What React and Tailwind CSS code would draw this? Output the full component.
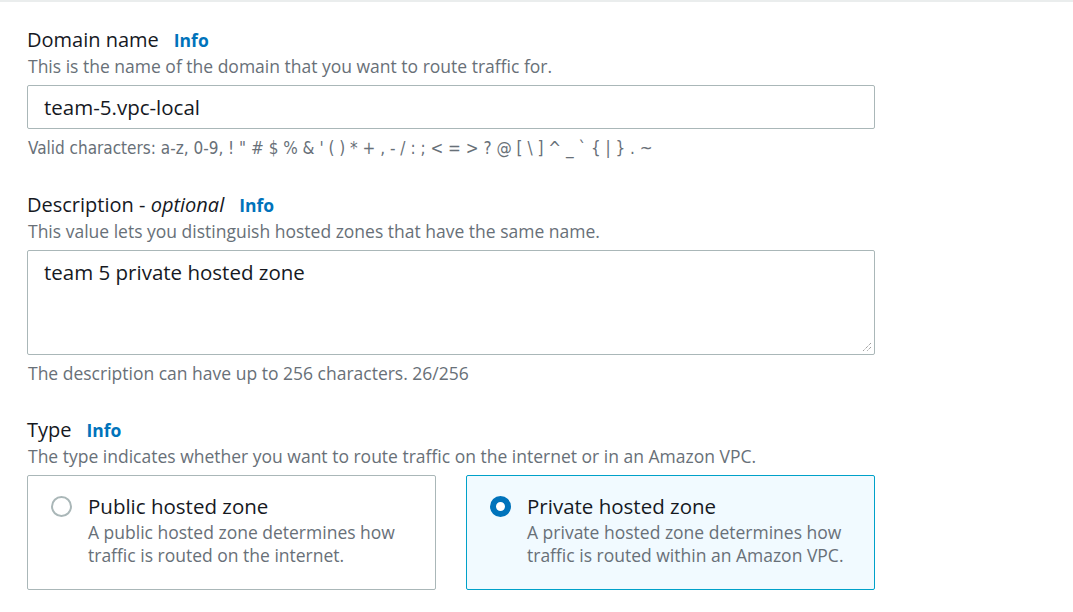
export default function App() {
  const font = { fontFamily: '"Open Sans", "Noto Sans", sans-serif' };
  const Info = () => (
    <span className="ml-[15px] text-[17.5px] font-bold text-[#0073bb] leading-[26px]">Info</span>
  );
  return (
    <div style={font} className="w-[1073px] h-[612px] bg-white overflow-hidden">
      <div className="h-[3px] border-t-2 border-[#eaeded]" />
      <div className="pl-[27px] w-[875px]">
        {/* Domain name */}
        <div className="mt-[24px] flex items-baseline">
          <span className="text-[20px] text-[#16191f] leading-[26px]">Domain name</span>
          <Info />
        </div>
        <div className="pl-px text-[17.5px] text-[#687078] leading-[26px]">
          This is the name of the domain that you want to route traffic for.
        </div>
        <div className="mt-[6px] h-[44px] border border-[#aab7b8] rounded-[2px] flex items-center pl-[16px] text-[20.5px] text-[#16191f]">
          team-5.vpc-local
        </div>
        <div
          className="mt-[6px] pl-px text-[17px] text-[#687078] leading-[26px]"
          style={{ fontFamily: '"Liberation Sans Narrow", "DejaVu Sans Condensed", sans-serif' }}
        >
          Valid characters: a-z, 0-9, ! " # $ % &amp; ' ( ) * + , - / : ; &lt; = &gt; ? @ [ \ ] ^ _ ` {"{"} | {"}"} . ~
        </div>

        {/* Description */}
        <div className="mt-[31px] flex items-baseline">
          <span className="text-[20px] text-[#16191f] leading-[26px]">
            Description - <i>optional</i>
          </span>
          <Info />
        </div>
        <div className="pl-px text-[17.5px] text-[#687078] leading-[26px]">
          This value lets you distinguish hosted zones that have the same name.
        </div>
        <div className="relative mt-[6px] h-[105px] border border-[#aab7b8] rounded-[2px] pl-[16px] pt-[8px] text-[20.5px] text-[#16191f] leading-[26px]">
          team 5 private hosted zone
          <svg className="absolute right-[2px] bottom-[2px]" width="10" height="10" viewBox="0 0 10 10">
            <path d="M9 1L1 9M9 5L5 9" stroke="#777" strokeWidth="1" strokeDasharray="1 1" />
          </svg>
        </div>
        <div className="mt-[5px] pl-px text-[17.5px] text-[#687078] leading-[26px]">
          The description can have up to 256 characters. 26/256
        </div>

        {/* Type */}
        <div className="mt-[31px] flex items-baseline">
          <span className="text-[20px] text-[#16191f] leading-[26px]">Type</span>
          <Info />
        </div>
        <div className="pl-px text-[17.5px] text-[#687078] leading-[26px]">
          The type indicates whether you want to route traffic on the internet or in an Amazon VPC.
        </div>
        <div className="mt-[6px] grid grid-cols-2 gap-[30px]">
          <div className="h-[115px] border border-[#aab7b8] rounded-[2px] flex pl-[23px] pt-[17px]">
            <div className="w-[21px] h-[21px] mt-[3px] rounded-full border-2 border-[#aab7b8] shrink-0" />
            <div className="ml-[16px]">
              <div className="text-[20.5px] text-[#16191f] leading-[26px]">Public hosted zone</div>
              <div className="mt-[2px] text-[17.5px] text-[#687078] leading-[23px]">
                A public hosted zone determines how
                <br />
                traffic is routed on the internet.
              </div>
            </div>
          </div>
          <div className="h-[115px] border border-[#00a1c9] bg-[#f1faff] rounded-[2px] flex pl-[23px] pt-[17px]">
            <div className="w-[21px] h-[21px] mt-[3px] rounded-full border-[6px] border-[#0073bb] bg-white shrink-0" />
            <div className="ml-[16px]">
              <div className="text-[20.5px] text-[#16191f] leading-[26px]">Private hosted zone</div>
              <div className="mt-[2px] text-[17.5px] text-[#687078] leading-[23px]">
                A private hosted zone determines how
                <br />
                traffic is routed within an Amazon VPC.
              </div>
            </div>
          </div>
        </div>
      </div>
    </div>
  );
}
